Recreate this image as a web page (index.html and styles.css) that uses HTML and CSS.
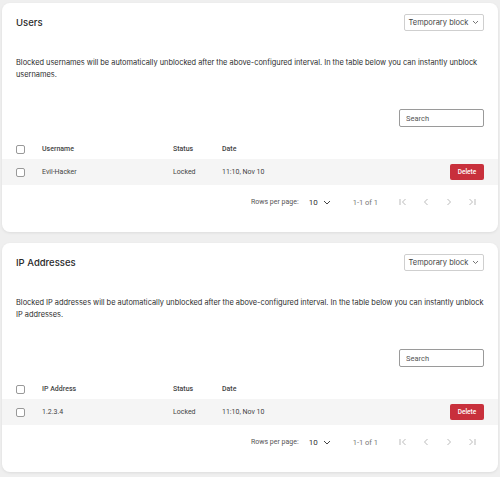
FILE: index.html
```html
<!DOCTYPE html>
<html lang="en">
<head>
    <meta charset="UTF-8">
    <title>Login Lockdown</title>
    <link rel="stylesheet" href="styles.css">
</head>
<body>
    <div class="panel">
        <div class="panel-head">
            <h2>Users</h2>
            <div class="select-box">Temporary block <svg width="7" height="5" viewBox="0 0 7 5"><path d="M1 1l2.5 2.5L6 1" fill="none" stroke="#666" stroke-width="0.9"/></svg></div>
        </div>
        <p class="panel-desc">Blocked usernames will be automatically unblocked after the above-configured interval. In the table below you can instantly unblock usernames.</p>
        <div class="search-row"><input class="search-input" type="text" placeholder="Search"></div>
        <div class="grid-row head-row">
            <span class="check"></span>
            <span>Username</span>
            <span>Status</span>
            <span>Date</span>
            <span></span>
        </div>
        <div class="grid-row body-row">
            <span class="check"></span>
            <span>Evil-Hacker</span>
            <span>Locked</span>
            <span>11:10, Nov 10</span>
            <button class="delete-btn">Delete</button>
        </div>
        <div class="pager">
            <span>Rows per page:</span>
            <span class="per-page">10 <svg width="8" height="5" viewBox="0 0 8 5"><path d="M1 1l3 3 3-3" fill="none" stroke="#444" stroke-width="1"/></svg></span>
            <span class="range">1-1 of 1</span>
            <span class="pager-icons">
                <svg width="10" height="10" viewBox="0 0 10 10"><path d="M2 2v6M7.5 2L4.5 5l3 3" fill="none" stroke="#bbb" stroke-width="1"/></svg>
                <svg width="10" height="10" viewBox="0 0 10 10"><path d="M6.5 2L3.5 5l3 3" fill="none" stroke="#bbb" stroke-width="1"/></svg>
                <svg width="10" height="10" viewBox="0 0 10 10"><path d="M3.5 2l3 3-3 3" fill="none" stroke="#bbb" stroke-width="1"/></svg>
                <svg width="10" height="10" viewBox="0 0 10 10"><path d="M2.5 2l3 3-3 3M8 2v6" fill="none" stroke="#bbb" stroke-width="1"/></svg>
            </span>
        </div>
    </div>

    <div class="panel">
        <div class="panel-head">
            <h2>IP Addresses</h2>
            <div class="select-box">Temporary block <svg width="7" height="5" viewBox="0 0 7 5"><path d="M1 1l2.5 2.5L6 1" fill="none" stroke="#666" stroke-width="0.9"/></svg></div>
        </div>
        <p class="panel-desc">Blocked IP addresses will be automatically unblocked after the above-configured interval. In the table below you can instantly unblock IP addresses.</p>
        <div class="search-row"><input class="search-input" type="text" placeholder="Search"></div>
        <div class="grid-row head-row">
            <span class="check"></span>
            <span>IP Address</span>
            <span>Status</span>
            <span>Date</span>
            <span></span>
        </div>
        <div class="grid-row body-row">
            <span class="check"></span>
            <span>1.2.3.4</span>
            <span>Locked</span>
            <span>11:10, Nov 10</span>
            <button class="delete-btn">Delete</button>
        </div>
        <div class="pager">
            <span>Rows per page:</span>
            <span class="per-page">10 <svg width="8" height="5" viewBox="0 0 8 5"><path d="M1 1l3 3 3-3" fill="none" stroke="#444" stroke-width="1"/></svg></span>
            <span class="range">1-1 of 1</span>
            <span class="pager-icons">
                <svg width="10" height="10" viewBox="0 0 10 10"><path d="M2 2v6M7.5 2L4.5 5l3 3" fill="none" stroke="#bbb" stroke-width="1"/></svg>
                <svg width="10" height="10" viewBox="0 0 10 10"><path d="M6.5 2L3.5 5l3 3" fill="none" stroke="#bbb" stroke-width="1"/></svg>
                <svg width="10" height="10" viewBox="0 0 10 10"><path d="M3.5 2l3 3-3 3" fill="none" stroke="#bbb" stroke-width="1"/></svg>
                <svg width="10" height="10" viewBox="0 0 10 10"><path d="M2.5 2l3 3-3 3M8 2v6" fill="none" stroke="#bbb" stroke-width="1"/></svg>
            </span>
        </div>
    </div>
</body>
</html>
```

FILE: styles.css
```css
* {
    margin: 0;
    padding: 0;
    box-sizing: border-box;
}
body {
    background-color: #efefef;
    padding: 3px 2px;
    font-family: Inter, "Noto Sans", sans-serif;
    color: #2c2c2c;
}
.panel {
    background-color: white;
    border-radius: 8px;
    box-shadow: 0 1px 3px rgba(0,0,0,0.08);
    height: 229px;
    margin-bottom: 11px;
    overflow: hidden;
}
.panel-head {
    display: flex;
    justify-content: space-between;
    align-items: center;
    padding: 11px 14px 0 14px;
    height: 28px;
}
.panel-head h2 {
    font-size: 9.5px;
    font-weight: 500;
    color: #2a2a2a;
}
.select-box {
    width: 80px;
    height: 17px;
    border: 1px solid #cfcfcf;
    border-radius: 2px;
    font-size: 7.5px;
    color: #444;
    display: flex;
    align-items: center;
    justify-content: center;
    gap: 4px;
}
.panel-desc {
    font-size: 7.4px;
    line-height: 12px;
    margin: 26px 14px 0 14px;
    color: #2c2c2c;
}
.search-row {
    display: flex;
    justify-content: flex-end;
    padding: 0 14px;
    margin-top: 28px;
}
.search-input {
    width: 85px;
    height: 18px;
    border: 1px solid #9a9a9a;
    border-radius: 2px;
    padding: 0 6px;
    font-family: Roboto, sans-serif;
    font-size: 7.5px;
    color: #333;
}
.search-input::placeholder {
    color: #555;
}
.grid-row {
    display: grid;
    grid-template-columns: 26px 131px 49px 1fr auto;
    align-items: center;
    padding: 0 14px;
    font-family: Roboto, sans-serif;
    font-size: 7px;
    color: #444;
}
.head-row {
    height: 20px;
    margin-top: 12px;
    font-weight: 500;
}
.body-row {
    height: 26px;
    background-color: #f5f5f5;
}
.check {
    width: 9px;
    height: 9px;
    border: 1px solid #999;
    border-radius: 2px;
    background: white;
}
.delete-btn {
    width: 34px;
    height: 16px;
    border: none;
    border-radius: 2px;
    background-color: #c8303c;
    color: white;
    font-family: Roboto, sans-serif;
    font-size: 6.5px;
    font-weight: 500;
}
.pager {
    display: flex;
    justify-content: flex-end;
    align-items: center;
    height: 34px;
    padding-right: 21px;
    font-family: Roboto, sans-serif;
    font-size: 7px;
    color: #555;
}
.per-page {
    display: flex;
    align-items: center;
    gap: 5px;
    margin-left: 10px;
    font-size: 8px;
    color: #333;
}
.range {
    margin-left: 22px;
    font-size: 7.5px;
    color: #777;
}
.pager-icons {
    display: flex;
    gap: 13px;
    margin-left: 20px;
}
```
